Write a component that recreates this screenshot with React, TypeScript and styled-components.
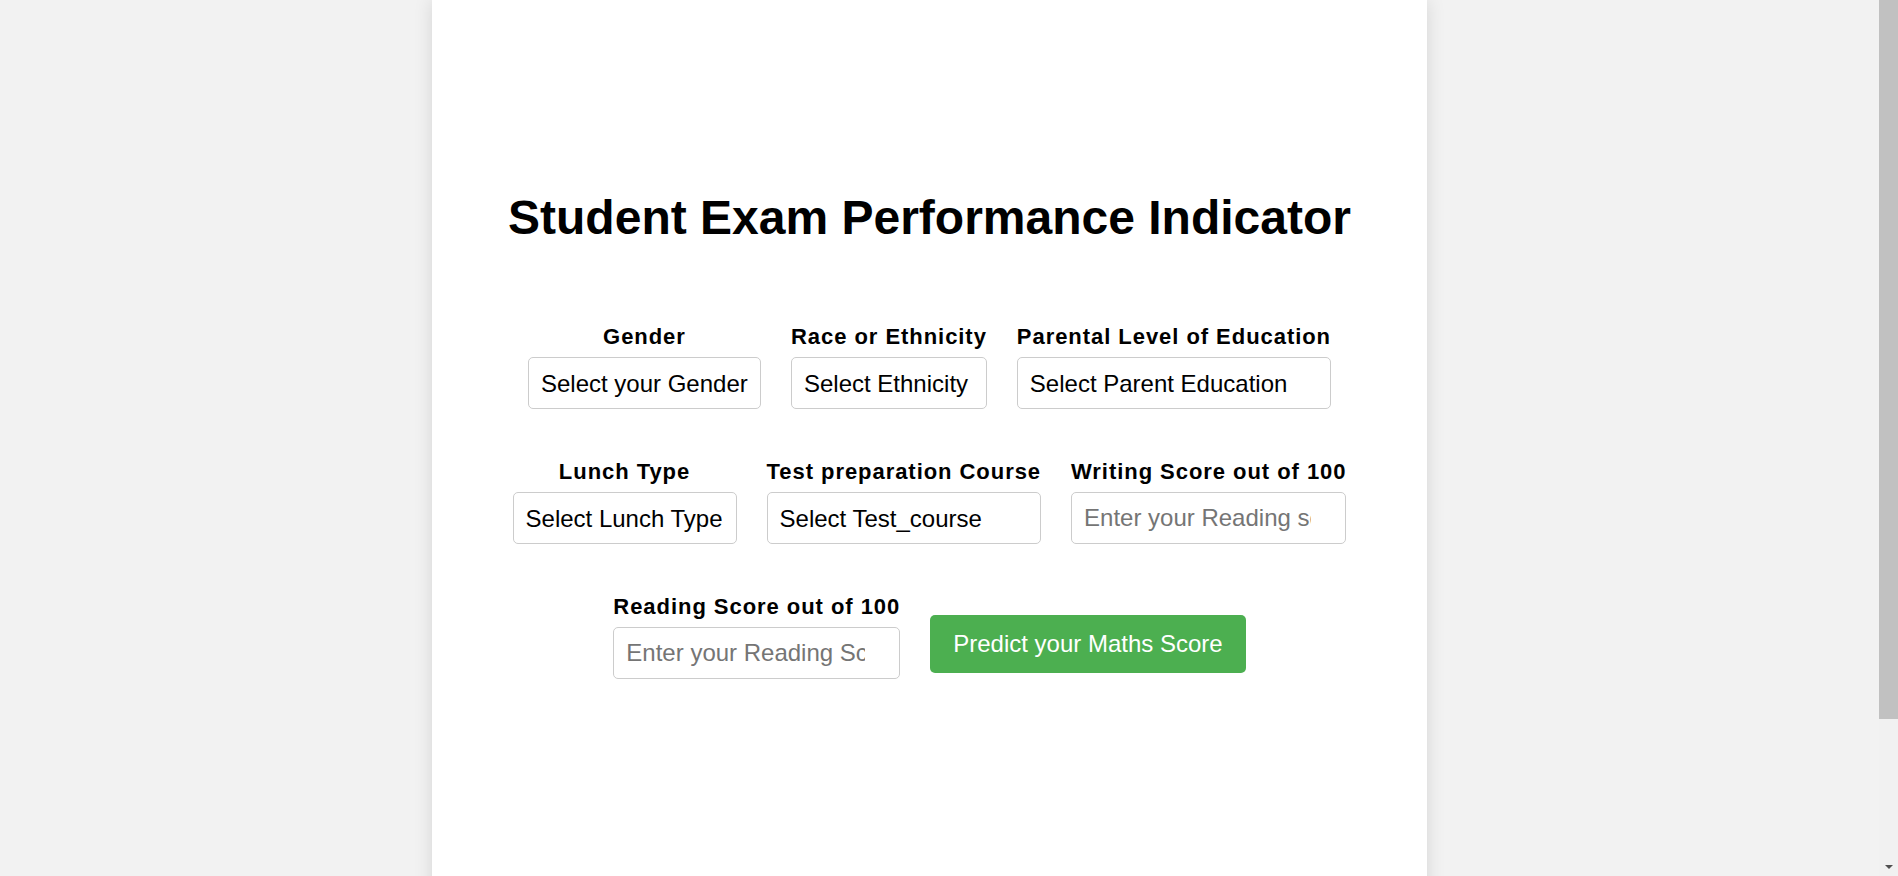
import styled, { createGlobalStyle } from 'styled-components';

type SelectField = {
	label: string;
	name: string;
	placeholder: string;
	options: string[];
};

type InputField = {
	label: string;
	name: string;
	placeholder: string;
};

const GlobalStyle = createGlobalStyle`
	html,
	body {
		margin: 0;
		height: 100%;
		overflow: hidden;
	}

	#root {
		height: 100%;
	}

	* {
		box-sizing: border-box;
	}
`;

const Screen = styled.div`
	display: flex;
	height: 100vh;
	overflow: hidden;
	background-color: #f2f2f2;
	font-family: 'Liberation Sans', Arial, sans-serif;
`;

const Viewport = styled.div`
	flex: 1;
	display: flex;
	justify-content: center;
	padding-right: 20px;
	overflow: hidden;
`;

// the browser's scrollbar, as it appears in the shot
const ScrollTrack = styled.div`
	width: 19px;
	flex-shrink: 0;
	display: flex;
	flex-direction: column;
	background-color: #f1f1f1;
`;

const ScrollThumb = styled.div`
	height: 719px;
	background-color: #c1c1c1;
`;

const ScrollArrow = styled.div`
	margin-top: auto;
	margin-bottom: 7px;
	align-self: center;
	width: 0;
	height: 0;
	border-left: 4px solid transparent;
	border-right: 4px solid transparent;
	border-top: 4px solid #505050;
`;

const Card = styled.main`
	width: 995px;
	min-height: 1067px;
	flex-shrink: 0;
	background-color: #fff;
	box-shadow: 0 0 18px rgba(0, 0, 0, 0.12);
	padding-top: 190px;
`;

const Title = styled.h1`
	margin: 0;
	font-size: 48px;
	font-weight: bold;
	line-height: normal;
	color: #000;
	text-align: center;
`;

const Form = styled.form`
	margin-top: 80px;
	display: flex;
	flex-direction: column;
	gap: 51px;
`;

const Row = styled.div`
	display: flex;
	justify-content: center;
	align-items: flex-start;
	gap: 30px;
`;

const Field = styled.div`
	display: flex;
	flex-direction: column;
	align-items: stretch;
`;

const Label = styled.label`
	display: block;
	margin-bottom: 8px;
	font-size: 22px;
	font-weight: bold;
	line-height: 24px;
	letter-spacing: 0.95px;
	text-align: center;
	white-space: nowrap;
	color: #000;
`;

const Select = styled.select`
	appearance: none;
	height: 52px;
	padding: 0 12px;
	border: 1px solid #ccc;
	border-radius: 5px;
	background-color: #fff;
	font-family: inherit;
	font-size: 24px;
	color: #000;
	outline: none;
`;

const Input = styled.input`
	width: 0;
	min-width: 100%;
	height: 52px;
	padding: 0 34px 0 12px;
	border: 1px solid #ccc;
	border-radius: 5px;
	background-color: #fff;
	font-family: inherit;
	font-size: 24px;
	color: #000;
	outline: none;
	appearance: textfield;

	&::placeholder {
		color: #757575;
	}

	&::-webkit-inner-spin-button,
	&::-webkit-outer-spin-button {
		appearance: none;
		margin: 0;
	}
`;

const SubmitButton = styled.button`
	margin-top: 20px;
	height: 58px;
	padding: 0 23px;
	border: none;
	border-radius: 5px;
	background-color: #4caf50;
	color: #fff;
	font-family: inherit;
	font-size: 24px;
	white-space: nowrap;
	cursor: pointer;
`;

const firstRow: SelectField[] = [
	{
		label: 'Gender',
		name: 'gender',
		placeholder: 'Select your Gender',
		options: ['male', 'female'],
	},
	{
		label: 'Race or Ethnicity',
		name: 'ethnicity',
		placeholder: 'Select Ethnicity',
		options: ['group A', 'group B', 'group C', 'group D', 'group E'],
	},
	{
		label: 'Parental Level of Education',
		name: 'parental_level_of_education',
		placeholder: 'Select Parent Education',
		options: [
			"associate's degree",
			"bachelor's degree",
			'high school',
			"master's degree",
			'some college',
			'some high school',
		],
	},
];

const secondRow: SelectField[] = [
	{
		label: 'Lunch Type',
		name: 'lunch',
		placeholder: 'Select Lunch Type',
		options: ['free/reduced', 'standard'],
	},
	{
		label: 'Test preparation Course',
		name: 'test_preparation_course',
		placeholder: 'Select Test_course',
		options: ['none', 'completed'],
	},
];

const writingField: InputField = {
	label: 'Writing Score out of 100',
	name: 'writing_score',
	placeholder: 'Enter your Reading score',
};

const readingField: InputField = {
	label: 'Reading Score out of 100',
	name: 'reading_score',
	placeholder: 'Enter your Reading Score',
};

const SelectBox = ({ label, name, placeholder, options }: SelectField) => (
	<Field>
		<Label htmlFor={name}>{label}</Label>
		<Select id={name} name={name} defaultValue="">
			<option value="" disabled>
				{placeholder}
			</option>
			{options.map((option) => (
				<option key={option} value={option}>
					{option}
				</option>
			))}
		</Select>
	</Field>
);

const ScoreBox = ({ label, name, placeholder }: InputField) => (
	<Field>
		<Label htmlFor={name}>{label}</Label>
		<Input id={name} name={name} type="number" min={0} max={100} placeholder={placeholder} />
	</Field>
);

const App = () => {
	return (
		<>
			<GlobalStyle />
			<Screen>
				<Viewport>
					<Card>
						<Title>Student Exam Performance Indicator</Title>
						<Form onSubmit={(e) => e.preventDefault()}>
							<Row>
								{firstRow.map((field) => (
									<SelectBox key={field.name} {...field} />
								))}
							</Row>
							<Row>
								{secondRow.map((field) => (
									<SelectBox key={field.name} {...field} />
								))}
								<ScoreBox {...writingField} />
							</Row>
							<Row>
								<ScoreBox {...readingField} />
								<SubmitButton type="submit">Predict your Maths Score</SubmitButton>
							</Row>
						</Form>
					</Card>
				</Viewport>
				<ScrollTrack>
					<ScrollThumb />
					<ScrollArrow />
				</ScrollTrack>
			</Screen>
		</>
	);
};

export default App;
